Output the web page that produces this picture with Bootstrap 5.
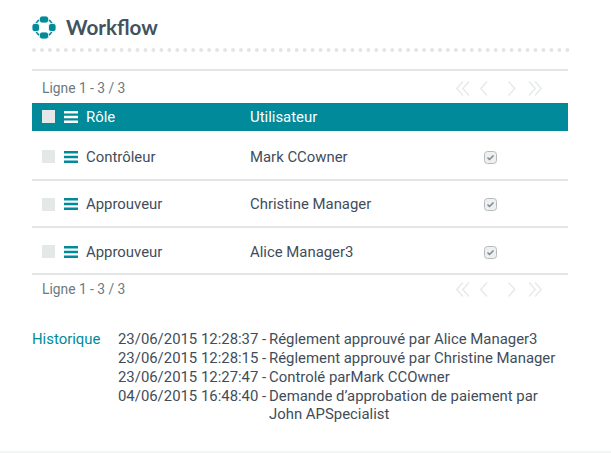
<!DOCTYPE html>
<html lang="fr">
<head>
    <meta charset="UTF-8">
    <title>Workflow</title>
    <link rel="stylesheet" href="https://cdn.jsdelivr.net/npm/bootstrap@5.3.0/dist/css/bootstrap.min.css">
    <style>
        html, body { height: 453px; overflow: hidden; }
        body { font-family: Roboto, sans-serif; font-size: 14.9px; color: #3f4d5a; background: #fff; }
        .wf-page { height: 453px; padding: 14px 43px 0 32px; border-bottom: 2px solid #f4f5f5; }
        .wf-head { height: 38px; border-bottom: 4px dotted #e3e5e5; margin-right: -2px; padding-bottom: 7px; gap: 10px; }
        .wf-head h1 { font-family: Lato, sans-serif; font-size: 20.6px; font-weight: 700; color: #41535f; margin: 0; }
        .wf-pager { height: 34px; padding: 2px 26px 0 10px; color: #6d7a80; font-size: 13.8px; }
        .wf-pager-top { margin-top: 17px; border-top: 2px solid #e4e6e6; }
        .wf-pager-bottom { height: 28px; border-top: 2px solid #e4e6e6; }
        .wf-table { width: 536px; table-layout: fixed; margin: 0; }
        .wf-table th, .wf-table td { padding: 0; vertical-align: middle; font-weight: 400; color: #3f4d5a; border-bottom: 2px solid #e4e6e6; box-shadow: none; }
        .wf-table thead th { height: 28px; background: #008a9a; color: #fff; border: 0; }
        .wf-table tbody td { height: 47px; padding-top: 2px; }
        .wf-table tbody tr:first-child td { height: 49px; padding-top: 4px; }
        .wf-table tbody tr:last-child td { height: 46px; padding-top: 3px; border-bottom: 0; }
        .wf-c1 { width: 218px; }
        .wf-c2 { width: 234px; }
        .wf-box { width: 13px; height: 13px; background: #e4e8e8; margin-left: 10px; margin-right: 9px; flex: none; }
        .wf-menu { width: 14px; height: 12px; margin-right: 8px; flex: none; color: #008a9a; }
        thead .wf-menu { color: #fff; }
        .wf-hist { margin-top: 29px; line-height: 19px; }
        .wf-hist-label { width: 86px; color: #008a9a; flex: none; }
        .wf-time { width: 151px; flex: none; }
        .wf-wrap { line-height: 18px; }
    </style>
</head>
<body>
<div class="wf-page">
    <div class="wf-head d-flex align-items-center">
        <svg width="24" height="23" viewBox="0 0 24 23" fill="#008a9a">
            <circle cx="12" cy="11.5" r="9" fill="none" stroke="#008a9a" stroke-width="1.5"/>
            <rect x="7.5" y="0" width="9" height="7" rx="2.5" stroke="#fff" stroke-width=".8"/>
            <rect x="7.5" y="16" width="9" height="7" rx="2.5" stroke="#fff" stroke-width=".8"/>
            <rect x="0" y="7.5" width="7.5" height="8" rx="2.5" stroke="#fff" stroke-width=".8"/>
            <rect x="16.5" y="7.5" width="7.5" height="8" rx="2.5" stroke="#fff" stroke-width=".8"/>
        </svg>
        <h1>Workflow</h1>
    </div>

    <div class="wf-pager wf-pager-top d-flex align-items-center justify-content-between">
        <span>Ligne 1 - 3 / 3</span>
        <svg width="86" height="15" viewBox="0 0 86 15" fill="none" stroke="#e8eaea" stroke-width="1.5">
            <path d="M7 .5 .8 7.5 7 14.5M13 .5 6.8 7.5 13 14.5M31 .5l-6.2 7 6.2 7M52.5.5l6.2 7-6.2 7M73 .5l6.2 7-6.2 7M79 .5l6.2 7-6.2 7"/>
        </svg>
    </div>

    <table class="table wf-table">
        <thead>
            <tr>
                <th class="wf-c1"><div class="d-flex align-items-center"><span class="wf-box"></span>
                    <svg class="wf-menu" viewBox="0 0 14 12" fill="currentColor"><path d="M0 0h14v2.4H0zM0 4.8h14v2.4H0zM0 9.6h14V12H0z"/></svg>Rôle</div></th>
                <th class="wf-c2">Utilisateur</th>
                <th></th>
            </tr>
        </thead>
        <tbody>
            <tr>
                <td><div class="d-flex align-items-center"><span class="wf-box"></span>
                    <svg class="wf-menu" viewBox="0 0 14 12" fill="currentColor"><path d="M0 0h14v2.4H0zM0 4.8h14v2.4H0zM0 9.6h14V12H0z"/></svg>Contrôleur</div></td>
                <td>Mark CCowner</td>
                <td><svg class="d-block" width="13" height="13" viewBox="0 0 13 13" fill="#eef0f0" stroke="#b4babd"><rect x=".5" y=".5" width="12" height="12" rx="3"/><path d="m3.5 6.5 2 2 4-4" fill="none" stroke="#7d878c" stroke-width="1.5"/></svg></td>
            </tr>
            <tr>
                <td><div class="d-flex align-items-center"><span class="wf-box"></span>
                    <svg class="wf-menu" viewBox="0 0 14 12" fill="currentColor"><path d="M0 0h14v2.4H0zM0 4.8h14v2.4H0zM0 9.6h14V12H0z"/></svg>Approuveur</div></td>
                <td>Christine Manager</td>
                <td><svg class="d-block" width="13" height="13" viewBox="0 0 13 13" fill="#eef0f0" stroke="#b4babd"><rect x=".5" y=".5" width="12" height="12" rx="3"/><path d="m3.5 6.5 2 2 4-4" fill="none" stroke="#7d878c" stroke-width="1.5"/></svg></td>
            </tr>
            <tr>
                <td><div class="d-flex align-items-center"><span class="wf-box"></span>
                    <svg class="wf-menu" viewBox="0 0 14 12" fill="currentColor"><path d="M0 0h14v2.4H0zM0 4.8h14v2.4H0zM0 9.6h14V12H0z"/></svg>Approuveur</div></td>
                <td>Alice Manager3</td>
                <td><svg class="d-block" width="13" height="13" viewBox="0 0 13 13" fill="#eef0f0" stroke="#b4babd"><rect x=".5" y=".5" width="12" height="12" rx="3"/><path d="m3.5 6.5 2 2 4-4" fill="none" stroke="#7d878c" stroke-width="1.5"/></svg></td>
            </tr>
        </tbody>
    </table>

    <div class="wf-pager wf-pager-bottom d-flex align-items-center justify-content-between">
        <span>Ligne 1 - 3 / 3</span>
        <svg width="86" height="15" viewBox="0 0 86 15" fill="none" stroke="#e8eaea" stroke-width="1.5">
            <path d="M7 .5 .8 7.5 7 14.5M13 .5 6.8 7.5 13 14.5M31 .5l-6.2 7 6.2 7M52.5.5l6.2 7-6.2 7M73 .5l6.2 7-6.2 7M79 .5l6.2 7-6.2 7"/>
        </svg>
    </div>

    <div class="wf-hist d-flex">
        <div class="wf-hist-label">Historique</div>
        <div class="flex-grow-1">
            <div class="d-flex"><span class="wf-time">23/06/2015 12:28:37 -</span><span>Réglement approuvé par Alice Manager3</span></div>
            <div class="d-flex"><span class="wf-time">23/06/2015 12:28:15 -</span><span>Réglement approuvé par Christine Manager</span></div>
            <div class="d-flex"><span class="wf-time">23/06/2015 12:27:47 -</span><span>Controlé parMark CCOwner</span></div>
            <div class="d-flex"><span class="wf-time">04/06/2015 16:48:40 -</span><span class="wf-wrap">Demande d’approbation de paiement par<br>John APSpecialist</span></div>
        </div>
    </div>
</div>
<script src="https://cdn.jsdelivr.net/npm/bootstrap@5.3.0/dist/js/bootstrap.bundle.min.js"></script>
</body>
</html>
